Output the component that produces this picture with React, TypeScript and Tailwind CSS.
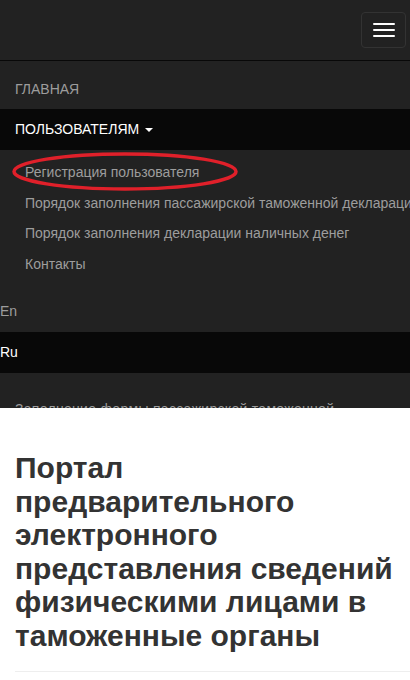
import React from "react";

export default function App() {
  const sub = [
    "Регистрация пользователя",
    "Порядок заполнения пассажирской таможенной декларации",
    "Порядок заполнения декларации наличных денег",
    "Контакты",
  ];
  return (
    <div className="w-[410px] h-[680px] overflow-hidden bg-white" style={{ fontFamily: '"Liberation Sans", Arial, Helvetica, sans-serif' }}>
      <div className="relative h-[408px] overflow-hidden bg-[#222222]">
        <div className="h-[61px] flex items-center justify-end pr-[4px] border-b border-[#080808]">
          <button className="w-[45px] h-[36px] rounded-[4px] border border-[#333333] bg-[#222222] flex flex-col items-center justify-center gap-[4px]">
            <span className="block w-[22px] h-[2px] rounded-[1px] bg-white" />
            <span className="block w-[22px] h-[2px] rounded-[1px] bg-white" />
            <span className="block w-[22px] h-[2px] rounded-[1px] bg-white" />
          </button>
        </div>
        <div className="pt-[8px]">
          <div className="h-[40px] flex items-center px-[15px] text-[14px] text-[#9d9d9d]">ГЛАВНАЯ</div>
          <div className="h-[41px] flex items-center px-[15px] text-[14px] text-white bg-[#080808]">
            ПОЛЬЗОВАТЕЛЯМ
            <span className="ml-[6px] inline-block w-0 h-0 border-l-[4px] border-r-[4px] border-t-[4px] border-l-transparent border-r-transparent border-t-white" />
          </div>
          <div className="pt-[7px] pb-[3px]">
            {sub.map((s) => (
              <div key={s} className="h-[30.7px] flex items-center pl-[25px] text-[14px] text-[#9d9d9d] whitespace-nowrap">
                {s}
              </div>
            ))}
          </div>
        </div>
        <div className="pt-[9px]">
          <div className="h-[40px] flex items-center text-[14px] text-[#9d9d9d]">En</div>
          <div className="h-[41px] flex items-center text-[14px] text-white bg-[#080808]">Ru</div>
        </div>
        <div className="pt-[26px] pl-[15px] text-[14px] leading-[20px] tracking-[0.3px] text-[#9d9d9d] whitespace-nowrap">
          Заполнение формы пассажирской таможенной
        </div>
        <svg className="absolute left-[12px] top-[151px]" width="230" height="42" viewBox="0 0 230 42">
          <ellipse cx="113" cy="20.5" rx="111" ry="17.5" fill="none" stroke="#e0202a" strokeWidth="3.5" />
        </svg>
      </div>
      <div className="pl-[15px] pt-[43px]">
        <h1 className="pr-[10px] text-[30px] leading-[33.5px] font-bold text-[#333333]">
          Портал предварительного электронного представления сведений физическими лицами в таможенные органы
        </h1>
        <div className="mt-[19px] border-t border-[#eeeeee]" />
      </div>
    </div>
  );
}
